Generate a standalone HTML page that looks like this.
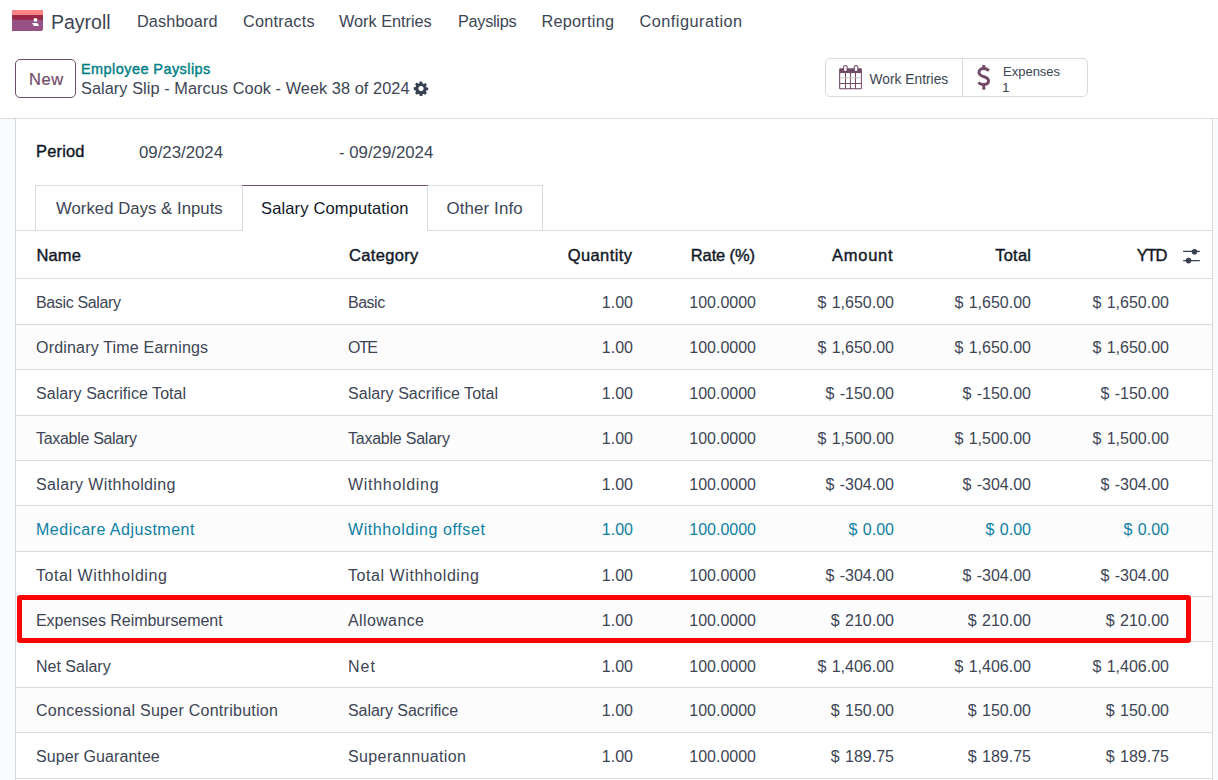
<!DOCTYPE html>
<html><head><meta charset="utf-8"><title>Payroll</title>
<style>
html,body{margin:0;padding:0;}
body{width:1218px;height:780px;overflow:hidden;position:relative;background:#fff;font-family:"Liberation Sans",sans-serif;}
.t{position:absolute;white-space:nowrap;}
</style></head><body>
<div style="position:absolute;left:0px;top:119px;width:15px;height:661px;background:#f9fafb"></div>
<div style="position:absolute;left:1213px;top:119px;width:5px;height:661px;background:#f9fafb"></div>
<div style="position:absolute;left:0px;top:118px;width:1218px;height:1px;background:#d8dadd"></div>
<div style="position:absolute;left:15px;top:119px;width:1px;height:661px;background:#d8dadd"></div>
<div style="position:absolute;left:1212px;top:119px;width:1px;height:661px;background:#d8dadd"></div>
<svg style="position:absolute;left:12px;top:10px" width="31" height="21" viewBox="0 0 31 21">
<path d="M0 2 Q0 0 2 0 H31 V19 Q31 21 29 21 H0 Z" fill="#985184"/>
<path d="M0 2 Q0 0 2 0 H31 V9.7 H2.5 Q0 9.7 0 7.5 Z" fill="#9B2846"/>
<path d="M0 2 Q0 0 2 0 H31 V5 H0 Z" fill="#FF8585"/>
<circle cx="23.5" cy="9.8" r="1.9" fill="#fff"/>
<path d="M20.1 13.1 H25.4 L27.1 15.9 H21.9 Z" fill="#fff"/>
</svg>
<div class="t" style="left:51px;top:13px;font-size:19.5px;line-height:19.5px;color:#3d4554;">Payroll</div>
<div class="t" style="left:137px;top:13px;font-size:16.25px;line-height:16.25px;color:#3d4554;letter-spacing:0.125px;">Dashboard</div>
<div class="t" style="left:243px;top:13px;font-size:16.25px;line-height:16.25px;color:#3d4554;letter-spacing:0.25px;">Contracts</div>
<div class="t" style="left:339px;top:13px;font-size:16.25px;line-height:16.25px;color:#3d4554;">Work Entries</div>
<div class="t" style="left:458px;top:13px;font-size:16.25px;line-height:16.25px;color:#3d4554;letter-spacing:-0.286px;">Payslips</div>
<div class="t" style="left:541.5px;top:13px;font-size:16.25px;line-height:16.25px;color:#3d4554;letter-spacing:0.25px;">Reporting</div>
<div class="t" style="left:639.5px;top:13px;font-size:16.25px;line-height:16.25px;color:#3d4554;letter-spacing:0.5px;">Configuration</div>
<div style="position:absolute;left:15px;top:59px;width:61px;height:39px;box-sizing:border-box;border:1px solid #714B67;border-radius:5px;background:#fff"></div>
<div class="t" style="left:29px;top:71px;font-size:16.5px;line-height:16.5px;color:#714B67;-webkit-text-stroke:0.2px #714B67;letter-spacing:0.6px;">New</div>
<div class="t" style="left:81px;top:62px;font-size:14.5px;line-height:14.5px;color:#017e84;-webkit-text-stroke:0.4px #017e84;letter-spacing:0.425px;">Employee Payslips</div>
<div class="t" style="left:81px;top:80px;font-size:16.3px;line-height:16.3px;color:#3d4554;letter-spacing:0.071px;">Salary Slip - Marcus Cook - Week 38 of 2024</div>
<svg style="position:absolute;left:413.4px;top:81.3px" width="16" height="15" viewBox="0 0 16 16">
<path fill="#374151" d="M8 0.5l1.3 0.2 0.4 2 1.1 0.5 1.7-1.1 1.8 1.8-1.1 1.7 0.5 1.1 2 0.4v2.6l-2 0.4-0.5 1.1 1.1 1.7-1.8 1.8-1.7-1.1-1.1 0.5-0.4 2H6.7l-0.4-2-1.1-0.5-1.7 1.1-1.8-1.8 1.1-1.7-0.5-1.1-2-0.4V6.7l2-0.4 0.5-1.1-1.1-1.7 1.8-1.8 1.7 1.1 1.1-0.5 0.4-2z M8 5.2a2.8 2.8 0 1 0 0.001 0z"/>
</svg>
<div style="position:absolute;left:825px;top:58px;width:263px;height:39px;box-sizing:border-box;border:1px solid #d8dadd;border-radius:5px;background:#fff"></div>
<div style="position:absolute;left:962px;top:59px;width:1px;height:37px;background:#d8dadd"></div>
<svg style="position:absolute;left:838px;top:64px" width="25" height="26" viewBox="0 0 25 26">
<rect x="1.1" y="4.2" width="22.8" height="21" rx="1.2" fill="#714B67"/>
<rect x="5" y="0.9" width="4.7" height="7" rx="2.1" fill="#714B67"/>
<rect x="15.7" y="0.9" width="4.7" height="7" rx="2.1" fill="#714B67"/>
<rect x="6.1" y="2.1" width="2.5" height="4.8" rx="1.2" fill="#fff"/>
<rect x="16.8" y="2.1" width="2.5" height="4.8" rx="1.2" fill="#fff"/>
<g fill="#fff">
<rect x="2.2" y="9.1" width="4.8" height="9.9"/><rect x="8" y="9.1" width="3.9" height="9.9"/><rect x="12.9" y="9.1" width="4.1" height="9.9"/><rect x="18" y="9.1" width="4.9" height="9.9"/>
<rect x="2.2" y="20" width="4.8" height="4.2"/><rect x="8" y="20" width="3.9" height="4.2"/><rect x="12.9" y="20" width="4.1" height="4.2"/><rect x="18" y="20" width="4.9" height="4.2"/>
</g><rect x="2.2" y="13.4" width="20.7" height="0.9" fill="#c9c1c7"/>
</svg>
<div class="t" style="left:869.5px;top:73px;font-size:13.8px;line-height:13.8px;color:#3d4554;">Work Entries</div>
<svg style="position:absolute;left:970px;top:60px" width="28" height="34" viewBox="0 0 28 34">
<rect x="12.3" y="5" width="3" height="4" fill="#714B67"/>
<rect x="12.3" y="24" width="3" height="5.7" fill="#714B67"/>
<path d="M18.9 10.6 C17.3 9.2 15.7 8.6 13.8 8.6 C10.9 8.6 9.0 10.3 9.0 12.5 C9.0 15 11.3 15.9 14 16.7 C16.9 17.6 18.5 18.7 18.5 21.1 C18.5 23.4 16.6 24.5 13.8 24.5 C11.8 24.5 10 23.9 8.3 22.6" fill="none" stroke="#714B67" stroke-width="3" stroke-linecap="butt"/>
</svg>
<div class="t" style="left:1003px;top:65px;font-size:13px;line-height:13px;color:#3d4554;">Expenses</div>
<div class="t" style="left:1002px;top:81px;font-size:13.5px;line-height:13.5px;color:#3d4554;">1</div>
<div class="t" style="left:36px;top:143px;font-size:16.5px;line-height:16.5px;color:#111827;-webkit-text-stroke:0.4px #111827;letter-spacing:0.16px;">Period</div>
<div class="t" style="left:139px;top:145px;font-size:16.8px;line-height:16.8px;color:#3d4554;">09/23/2024</div>
<div class="t" style="left:339px;top:145px;font-size:16.8px;line-height:16.8px;color:#3d4554;">- 09/29/2024</div>
<div style="position:absolute;left:15px;top:230px;width:1197px;height:1px;background:#d8dadd"></div>
<div style="position:absolute;left:35px;top:185px;width:208px;height:46px;box-sizing:border-box;border:1px solid #d8dadd;background:#fff"></div>
<div style="position:absolute;left:427px;top:185px;width:116px;height:46px;box-sizing:border-box;border:1px solid #d8dadd;background:#fff"></div>
<div style="position:absolute;left:242px;top:185px;width:186px;height:46px;box-sizing:border-box;border-left:1px solid #d8dadd;border-right:1px solid #d8dadd;border-top:1px solid #714B67;background:#fff"></div>
<div class="t" style="left:56px;top:201px;font-size:16.7px;line-height:16.7px;color:#3d4554;letter-spacing:0.053px;">Worked Days &amp; Inputs</div>
<div class="t" style="left:261px;top:200px;font-size:16.5px;line-height:16.5px;color:#111827;letter-spacing:0.147px;">Salary Computation</div>
<div class="t" style="left:446.5px;top:201px;font-size:16.9px;line-height:16.9px;color:#3d4554;letter-spacing:0.111px;">Other Info</div>
<div class="t" style="left:36.5px;top:247px;font-size:16.5px;line-height:16.5px;color:#111827;-webkit-text-stroke:0.4px #111827;letter-spacing:0.1px;">Name</div>
<div class="t" style="left:349px;top:247px;font-size:16.5px;line-height:16.5px;color:#111827;-webkit-text-stroke:0.4px #111827;letter-spacing:0.329px;">Category</div>
<div class="t" style="right:586px;text-align:right;top:247px;font-size:16.5px;line-height:16.5px;color:#111827;-webkit-text-stroke:0.4px #111827;margin-right:-0.400px;letter-spacing:0.4px;">Quantity</div>
<div class="t" style="right:463px;text-align:right;top:247px;font-size:16.5px;line-height:16.5px;color:#111827;-webkit-text-stroke:0.4px #111827;margin-right:0.129px;letter-spacing:-0.129px;">Rate (%)</div>
<div class="t" style="right:325.4px;text-align:right;top:247px;font-size:16.5px;line-height:16.5px;color:#111827;-webkit-text-stroke:0.4px #111827;margin-right:-0.740px;letter-spacing:0.74px;">Amount</div>
<div class="t" style="right:187px;text-align:right;top:247px;font-size:16.5px;line-height:16.5px;color:#111827;-webkit-text-stroke:0.4px #111827;margin-right:-0.250px;letter-spacing:0.25px;">Total</div>
<div class="t" style="right:50.5px;text-align:right;top:247px;font-size:16.5px;line-height:16.5px;color:#111827;-webkit-text-stroke:0.4px #111827;margin-right:1.100px;letter-spacing:-1.1px;">YTD</div>
<svg style="position:absolute;left:1182px;top:248px" width="19" height="17" viewBox="0 0 19 17">
<rect x="1" y="2.8" width="17" height="1.25" rx="0.6" fill="#374151"/>
<circle cx="12.5" cy="3.7" r="2.8" fill="#374151"/>
<rect x="1" y="11.9" width="17" height="1.25" rx="0.6" fill="#374151"/>
<circle cx="6.5" cy="12.6" r="2.8" fill="#374151"/>
</svg>
<div style="position:absolute;left:15px;top:278px;width:1197px;height:1px;background:#d8dadd"></div>
<div style="position:absolute;left:15px;top:324px;width:1197px;height:1px;background:#d8dadd"></div>
<div class="t" style="left:36px;top:295px;font-size:16px;line-height:16px;color:#3d4554;letter-spacing:-0.364px;">Basic Salary</div>
<div class="t" style="left:348px;top:295px;font-size:16px;line-height:16px;color:#3d4554;letter-spacing:-0.5px;">Basic</div>
<div class="t" style="right:585px;text-align:right;top:295px;font-size:16px;line-height:16px;color:#3d4554;">1.00</div>
<div class="t" style="right:462px;text-align:right;top:295px;font-size:16px;line-height:16px;color:#3d4554;">100.0000</div>
<div class="t" style="right:324px;text-align:right;top:295px;font-size:16px;line-height:16px;color:#3d4554;word-spacing:1px;">$ 1,650.00</div>
<div class="t" style="right:187px;text-align:right;top:295px;font-size:16px;line-height:16px;color:#3d4554;word-spacing:1px;">$ 1,650.00</div>
<div class="t" style="right:49px;text-align:right;top:295px;font-size:16px;line-height:16px;color:#3d4554;word-spacing:1px;">$ 1,650.00</div>
<div style="position:absolute;left:16px;top:325px;width:1196px;height:44px;background:#fcfcfc"></div>
<div style="position:absolute;left:15px;top:369px;width:1197px;height:1px;background:#d8dadd"></div>
<div class="t" style="left:36px;top:340px;font-size:16px;line-height:16px;color:#3d4554;letter-spacing:0.19px;">Ordinary Time Earnings</div>
<div class="t" style="left:348px;top:340px;font-size:16px;line-height:16px;color:#3d4554;letter-spacing:-1.5px;">OTE</div>
<div class="t" style="right:585px;text-align:right;top:340px;font-size:16px;line-height:16px;color:#3d4554;">1.00</div>
<div class="t" style="right:462px;text-align:right;top:340px;font-size:16px;line-height:16px;color:#3d4554;">100.0000</div>
<div class="t" style="right:324px;text-align:right;top:340px;font-size:16px;line-height:16px;color:#3d4554;word-spacing:1px;">$ 1,650.00</div>
<div class="t" style="right:187px;text-align:right;top:340px;font-size:16px;line-height:16px;color:#3d4554;word-spacing:1px;">$ 1,650.00</div>
<div class="t" style="right:49px;text-align:right;top:340px;font-size:16px;line-height:16px;color:#3d4554;word-spacing:1px;">$ 1,650.00</div>
<div style="position:absolute;left:15px;top:415px;width:1197px;height:1px;background:#d8dadd"></div>
<div class="t" style="left:36px;top:386px;font-size:16px;line-height:16px;color:#3d4554;letter-spacing:0.048px;">Salary Sacrifice Total</div>
<div class="t" style="left:348px;top:386px;font-size:16px;line-height:16px;color:#3d4554;letter-spacing:0.048px;">Salary Sacrifice Total</div>
<div class="t" style="right:585px;text-align:right;top:386px;font-size:16px;line-height:16px;color:#3d4554;">1.00</div>
<div class="t" style="right:462px;text-align:right;top:386px;font-size:16px;line-height:16px;color:#3d4554;">100.0000</div>
<div class="t" style="right:324px;text-align:right;top:386px;font-size:16px;line-height:16px;color:#3d4554;word-spacing:1px;">$ -150.00</div>
<div class="t" style="right:187px;text-align:right;top:386px;font-size:16px;line-height:16px;color:#3d4554;word-spacing:1px;">$ -150.00</div>
<div class="t" style="right:49px;text-align:right;top:386px;font-size:16px;line-height:16px;color:#3d4554;word-spacing:1px;">$ -150.00</div>
<div style="position:absolute;left:16px;top:416px;width:1196px;height:44px;background:#fcfcfc"></div>
<div style="position:absolute;left:15px;top:460px;width:1197px;height:1px;background:#d8dadd"></div>
<div class="t" style="left:36px;top:431px;font-size:16px;line-height:16px;color:#3d4554;letter-spacing:-0.308px;">Taxable Salary</div>
<div class="t" style="left:348px;top:431px;font-size:16px;line-height:16px;color:#3d4554;letter-spacing:-0.231px;">Taxable Salary</div>
<div class="t" style="right:585px;text-align:right;top:431px;font-size:16px;line-height:16px;color:#3d4554;">1.00</div>
<div class="t" style="right:462px;text-align:right;top:431px;font-size:16px;line-height:16px;color:#3d4554;">100.0000</div>
<div class="t" style="right:324px;text-align:right;top:431px;font-size:16px;line-height:16px;color:#3d4554;word-spacing:1px;">$ 1,500.00</div>
<div class="t" style="right:187px;text-align:right;top:431px;font-size:16px;line-height:16px;color:#3d4554;word-spacing:1px;">$ 1,500.00</div>
<div class="t" style="right:49px;text-align:right;top:431px;font-size:16px;line-height:16px;color:#3d4554;word-spacing:1px;">$ 1,500.00</div>
<div style="position:absolute;left:15px;top:505px;width:1197px;height:1px;background:#d8dadd"></div>
<div class="t" style="left:36px;top:477px;font-size:16px;line-height:16px;color:#3d4554;letter-spacing:0.353px;">Salary Withholding</div>
<div class="t" style="left:348px;top:477px;font-size:16px;line-height:16px;color:#3d4554;letter-spacing:0.7px;">Withholding</div>
<div class="t" style="right:585px;text-align:right;top:477px;font-size:16px;line-height:16px;color:#3d4554;">1.00</div>
<div class="t" style="right:462px;text-align:right;top:477px;font-size:16px;line-height:16px;color:#3d4554;">100.0000</div>
<div class="t" style="right:324px;text-align:right;top:477px;font-size:16px;line-height:16px;color:#3d4554;word-spacing:1px;">$ -304.00</div>
<div class="t" style="right:187px;text-align:right;top:477px;font-size:16px;line-height:16px;color:#3d4554;word-spacing:1px;">$ -304.00</div>
<div class="t" style="right:49px;text-align:right;top:477px;font-size:16px;line-height:16px;color:#3d4554;word-spacing:1px;">$ -304.00</div>
<div style="position:absolute;left:16px;top:506px;width:1196px;height:45px;background:#fcfcfc"></div>
<div style="position:absolute;left:15px;top:551px;width:1197px;height:1px;background:#d8dadd"></div>
<div class="t" style="left:36px;top:522px;font-size:16px;line-height:16px;color:#0d80a3;letter-spacing:0.5px;">Medicare Adjustment</div>
<div class="t" style="left:348px;top:522px;font-size:16px;line-height:16px;color:#0d80a3;letter-spacing:0.588px;">Withholding offset</div>
<div class="t" style="right:585px;text-align:right;top:522px;font-size:16px;line-height:16px;color:#0d80a3;">1.00</div>
<div class="t" style="right:462px;text-align:right;top:522px;font-size:16px;line-height:16px;color:#0d80a3;">100.0000</div>
<div class="t" style="right:324px;text-align:right;top:522px;font-size:16px;line-height:16px;color:#0d80a3;word-spacing:1px;">$ 0.00</div>
<div class="t" style="right:187px;text-align:right;top:522px;font-size:16px;line-height:16px;color:#0d80a3;word-spacing:1px;">$ 0.00</div>
<div class="t" style="right:49px;text-align:right;top:522px;font-size:16px;line-height:16px;color:#0d80a3;word-spacing:1px;">$ 0.00</div>
<div style="position:absolute;left:15px;top:596px;width:1197px;height:1px;background:#d8dadd"></div>
<div class="t" style="left:36px;top:568px;font-size:16px;line-height:16px;color:#3d4554;letter-spacing:0.562px;">Total Withholding</div>
<div class="t" style="left:348px;top:568px;font-size:16px;line-height:16px;color:#3d4554;letter-spacing:0.562px;">Total Withholding</div>
<div class="t" style="right:585px;text-align:right;top:568px;font-size:16px;line-height:16px;color:#3d4554;">1.00</div>
<div class="t" style="right:462px;text-align:right;top:568px;font-size:16px;line-height:16px;color:#3d4554;">100.0000</div>
<div class="t" style="right:324px;text-align:right;top:568px;font-size:16px;line-height:16px;color:#3d4554;word-spacing:1px;">$ -304.00</div>
<div class="t" style="right:187px;text-align:right;top:568px;font-size:16px;line-height:16px;color:#3d4554;word-spacing:1px;">$ -304.00</div>
<div class="t" style="right:49px;text-align:right;top:568px;font-size:16px;line-height:16px;color:#3d4554;word-spacing:1px;">$ -304.00</div>
<div style="position:absolute;left:16px;top:597px;width:1196px;height:44px;background:#fcfcfc"></div>
<div style="position:absolute;left:15px;top:641px;width:1197px;height:1px;background:#d8dadd"></div>
<div class="t" style="left:36px;top:613px;font-size:16px;line-height:16px;color:#3d4554;letter-spacing:-0.048px;">Expenses Reimbursement</div>
<div class="t" style="left:348px;top:613px;font-size:16px;line-height:16px;color:#3d4554;letter-spacing:0.375px;">Allowance</div>
<div class="t" style="right:585px;text-align:right;top:613px;font-size:16px;line-height:16px;color:#3d4554;">1.00</div>
<div class="t" style="right:462px;text-align:right;top:613px;font-size:16px;line-height:16px;color:#3d4554;">100.0000</div>
<div class="t" style="right:324px;text-align:right;top:613px;font-size:16px;line-height:16px;color:#3d4554;word-spacing:1px;">$ 210.00</div>
<div class="t" style="right:187px;text-align:right;top:613px;font-size:16px;line-height:16px;color:#3d4554;word-spacing:1px;">$ 210.00</div>
<div class="t" style="right:49px;text-align:right;top:613px;font-size:16px;line-height:16px;color:#3d4554;word-spacing:1px;">$ 210.00</div>
<div style="position:absolute;left:15px;top:687px;width:1197px;height:1px;background:#d8dadd"></div>
<div class="t" style="left:36px;top:659px;font-size:16px;line-height:16px;color:#3d4554;">Net Salary</div>
<div class="t" style="left:348px;top:659px;font-size:16px;line-height:16px;color:#3d4554;letter-spacing:1.0px;">Net</div>
<div class="t" style="right:585px;text-align:right;top:659px;font-size:16px;line-height:16px;color:#3d4554;">1.00</div>
<div class="t" style="right:462px;text-align:right;top:659px;font-size:16px;line-height:16px;color:#3d4554;">100.0000</div>
<div class="t" style="right:324px;text-align:right;top:659px;font-size:16px;line-height:16px;color:#3d4554;word-spacing:1px;">$ 1,406.00</div>
<div class="t" style="right:187px;text-align:right;top:659px;font-size:16px;line-height:16px;color:#3d4554;word-spacing:1px;">$ 1,406.00</div>
<div class="t" style="right:49px;text-align:right;top:659px;font-size:16px;line-height:16px;color:#3d4554;word-spacing:1px;">$ 1,406.00</div>
<div style="position:absolute;left:16px;top:688px;width:1196px;height:44px;background:#fcfcfc"></div>
<div style="position:absolute;left:15px;top:732px;width:1197px;height:1px;background:#d8dadd"></div>
<div class="t" style="left:36px;top:703px;font-size:16px;line-height:16px;color:#3d4554;letter-spacing:0.267px;">Concessional Super Contribution</div>
<div class="t" style="left:348px;top:703px;font-size:16px;line-height:16px;color:#3d4554;letter-spacing:-0.067px;">Salary Sacrifice</div>
<div class="t" style="right:585px;text-align:right;top:703px;font-size:16px;line-height:16px;color:#3d4554;">1.00</div>
<div class="t" style="right:462px;text-align:right;top:703px;font-size:16px;line-height:16px;color:#3d4554;">100.0000</div>
<div class="t" style="right:324px;text-align:right;top:703px;font-size:16px;line-height:16px;color:#3d4554;word-spacing:1px;">$ 150.00</div>
<div class="t" style="right:187px;text-align:right;top:703px;font-size:16px;line-height:16px;color:#3d4554;word-spacing:1px;">$ 150.00</div>
<div class="t" style="right:49px;text-align:right;top:703px;font-size:16px;line-height:16px;color:#3d4554;word-spacing:1px;">$ 150.00</div>
<div style="position:absolute;left:15px;top:778px;width:1197px;height:1px;background:#d8dadd"></div>
<div class="t" style="left:36px;top:749px;font-size:16px;line-height:16px;color:#3d4554;letter-spacing:0.071px;">Super Guarantee</div>
<div class="t" style="left:348px;top:749px;font-size:16px;line-height:16px;color:#3d4554;letter-spacing:0.385px;">Superannuation</div>
<div class="t" style="right:585px;text-align:right;top:749px;font-size:16px;line-height:16px;color:#3d4554;">1.00</div>
<div class="t" style="right:462px;text-align:right;top:749px;font-size:16px;line-height:16px;color:#3d4554;">100.0000</div>
<div class="t" style="right:324px;text-align:right;top:749px;font-size:16px;line-height:16px;color:#3d4554;word-spacing:1px;">$ 189.75</div>
<div class="t" style="right:187px;text-align:right;top:749px;font-size:16px;line-height:16px;color:#3d4554;word-spacing:1px;">$ 189.75</div>
<div class="t" style="right:49px;text-align:right;top:749px;font-size:16px;line-height:16px;color:#3d4554;word-spacing:1px;">$ 189.75</div>
<div style="position:absolute;left:17px;top:595px;width:1174px;height:48px;box-sizing:border-box;border:5px solid #ff0000;border-radius:3px"></div>
</body></html>
